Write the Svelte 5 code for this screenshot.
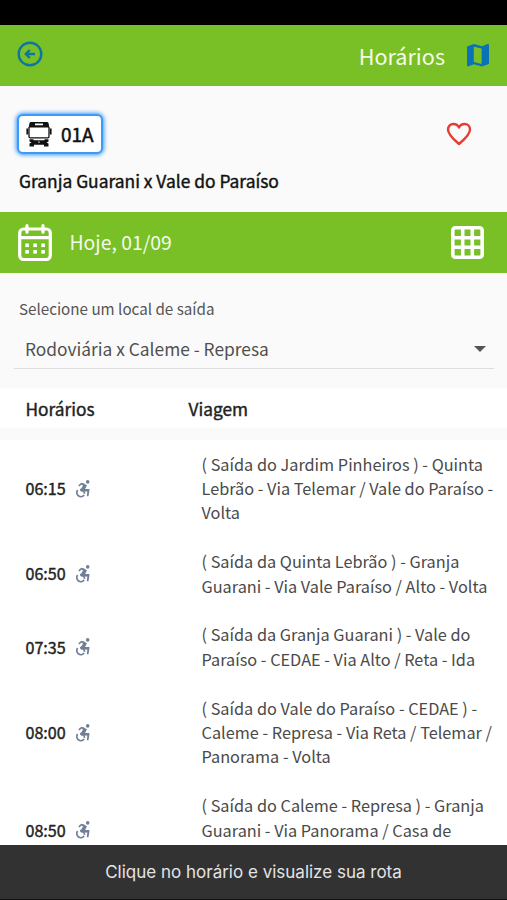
<script lang="ts">
  interface Trip {
    time: string;
    lines: string[];
  }

  const trips: Trip[] = [
    {
      time: "06:15",
      lines: [
        "( Saída do Jardim Pinheiros ) - Quinta",
        "Lebrão - Via Telemar / Vale do Paraíso -",
        "Volta",
      ],
    },
    {
      time: "06:50",
      lines: [
        "( Saída da Quinta Lebrão ) - Granja",
        "Guarani - Via Vale Paraíso / Alto - Volta",
      ],
    },
    {
      time: "07:35",
      lines: [
        "( Saída da Granja Guarani ) - Vale do",
        "Paraíso - CEDAE - Via Alto / Reta - Ida",
      ],
    },
    {
      time: "08:00",
      lines: [
        "( Saída do Vale do Paraíso - CEDAE ) -",
        "Caleme - Represa - Via Reta / Telemar /",
        "Panorama - Volta",
      ],
    },
    {
      time: "08:50",
      lines: [
        "( Saída do Caleme - Represa ) - Granja",
        "Guarani - Via Panorama / Casa de",
        "",
      ],
    },
  ];

  const dots = [0, 1, 2];

  let favorite = $state(false);
</script>

<div class="screen">
  <div class="status-bar"></div>

  <header class="toolbar">
    <button type="button" class="icon-button" aria-label="Voltar">
      <svg class="back" viewBox="0 0 26 26">
        <circle cx="13" cy="13" r="11.3" />
        <path d="M18 13H9.500M12.800 9L8.800 13l4 4" />
      </svg>
    </button>
    <h1>Horários</h1>
    <button type="button" class="icon-button" aria-label="Mapa">
      <svg class="map" viewBox="0 0 24 24">
        <path
          fill-rule="evenodd"
          d="M1.5 3.2L8 1l8 2.2L21.5 1q1.5-.4 1.5 1v18.3q0 .7-.8 1L16 23.4l-8-2.2-5.500 2.100Q1 23.700 1 22.300V4q0-.6.5-.8zM7.800 3.700v15.400l7.800 1.800V5.500z"
        />
      </svg>
    </button>
  </header>

  <section class="line">
    <div class="line-top">
      <div class="badge">
        <svg class="bus" viewBox="0 0 26 26">
          <path
            fill-rule="evenodd"
            d="M3.500 2Q3.700 1 5 1h16q1.300 0 1.500 1l.8 4.500H2.700zM9 2.500v1.800h8V2.500z"
          />
          <path class="frame" d="M3 6v9.500q0 1.300 1.300 1.300h17.400q1.300 0 1.300-1.300V6" />
          <path class="mirror" d="M1.300 7.500v6M24.700 7.500v6" />
          <path
            fill-rule="evenodd"
            d="M3.500 18.300h3.500l1 1h10l1-1h3.500v2.200l-2 1 2 1v3h-4.500v-1.700H8v1.700H3.500v-3l2-1-2-1zM12.400 20.500v1.200h1.200v-1.200z"
          />
        </svg>
        <span>01A</span>
      </div>
      <button
        type="button"
        class="icon-button"
        aria-label="Favorito"
        aria-pressed={favorite}
        onclick={() => (favorite = !favorite)}
      >
        <svg class="heart" class:filled={favorite} viewBox="0 0 26 24">
          <path
            d="M13 22C9 18.500 2 13 2 7.500 2 4.300 4.300 2 7.300 2 9.800 2 12 3.300 13 5.600 14 3.300 16.200 2 18.700 2 21.700 2 24 4.300 24 7.500 24 13 17 18.500 13 22z"
          />
        </svg>
      </button>
    </div>
    <h2>Granja Guarani x Vale do Paraíso</h2>
  </section>

  <div class="date-bar">
    <svg class="calendar" viewBox="0 0 34 38">
      <rect x="1.700" y="5" width="30.600" height="30.500" rx="4" />
      <path d="M2 13.700h30M9 1.700v6.500M25 1.700v6.500" />
      {#each dots as col}
        <rect class="dot" x={7.3 + col * 8} y="19.500" width="3.600" height="3.600" />
        <rect class="dot" x={7.3 + col * 8} y="26" width="3.600" height="3.600" />
      {/each}
    </svg>
    <span class="date">Hoje, 01/09</span>
    <svg class="grid" viewBox="0 0 33 33">
      <rect x="1.800" y="1.800" width="29.400" height="29.400" rx="2.500" />
      <path d="M11.700 2v29M21.300 2v29M2 11.700h29M2 21.300h29" />
    </svg>
  </div>

  <section class="departure">
    <div class="label">Selecione um local de saída</div>
    <div class="select">
      <span>Rodoviária x Caleme - Represa</span>
      <i class="caret"></i>
    </div>
  </section>

  <div class="table-head">
    <span>Horários</span>
    <span>Viagem</span>
  </div>

  <main class="trips">
    {#each trips as trip}
      <div class="trip">
        <div class="time">
          <span>{trip.time}</span>
          <svg class="wheelchair" viewBox="0 0 16 18">
            <circle class="solid" cx="12.700" cy="1.900" r="1.800" />
            <path d="M3.800 5.800L6.500 3.700l3.500 1" />
            <path class="solid" d="M7 3l5 2.300-1.900 3.700h4.300v1.800l-.9 5.500h-1.700l.5-4.800-5.800.2-1.500-1.500L7.800 6z" />
            <path class="wheel" d="M2.600 10a4 4 0 1 0 6.600 5" />
            <path class="wheel" d="M5 9.500q4.200.2 4.600 4.300" />
          </svg>
        </div>
        <div class="route">
          {#each trip.lines as line}
            <div>{line}</div>
          {/each}
        </div>
      </div>
    {/each}
  </main>

  <footer class="snackbar">Clique no horário e visualize sua rota</footer>
</div>

<style>
  :global(body) {
    margin: 0;
    background: #000;
  }

  .screen {
    display: flex;
    flex-direction: column;
    width: 507px;
    height: 900px;
    overflow: hidden;
    background: #fafafa;
    color: #4a4a4a;
    font-family: "Noto Sans CJK SC", "Noto Sans", sans-serif;
    font-size: 16.3px;
    line-height: 24.4px;
    white-space: nowrap;
  }

  .screen > * {
    flex-shrink: 0;
    box-sizing: border-box;
  }

  svg {
    display: block;
    flex-shrink: 0;
  }

  h1,
  h2 {
    margin: 0;
    font-weight: 400;
  }

  .icon-button {
    padding: 0;
    border: 0;
    background: none;
    cursor: pointer;
  }

  .status-bar {
    height: 25px;
    background: #000;
  }

  .toolbar {
    display: flex;
    align-items: center;
    height: 61px;
    padding: 0 17px;
    background: #79c026;
  }

  .toolbar h1 {
    margin: 0 21px 0 auto;
    padding-top: 2px;
    color: #f4faec;
    font-size: 21.6px;
  }

  .back {
    width: 26px;
    height: 26px;
    margin-bottom: 3px;
    fill: none;
    stroke: #0e74a0;
    stroke-width: 2.4;
  }

  .map {
    width: 24px;
    height: 24px;
    margin-bottom: 1px;
    fill: #0b72b5;
  }

  .line {
    height: 126px;
    padding: 28px 35px 0 17px;
  }

  .line-top {
    display: flex;
    align-items: center;
    justify-content: space-between;
    height: 40px;
  }

  .badge {
    display: flex;
    align-items: center;
    gap: 9px;
    box-sizing: border-box;
    width: 86px;
    height: 40px;
    padding-left: 7px;
    border: 2px solid #3b9bfa;
    border-radius: 6px;
    background: #fff;
    box-shadow: 0 0 4px 1px #3b9bfa;
    color: #111;
    font-size: 19px;
    -webkit-text-stroke: 0.5px;
  }

  .bus {
    width: 26px;
    height: 26px;
    fill: #111;
  }

  .bus .frame,
  .bus .mirror {
    fill: none;
    stroke: #111;
    stroke-width: 1.3;
  }

  .bus .mirror {
    stroke-width: 1.8;
  }

  .heart {
    width: 26px;
    height: 24px;
    fill: none;
    stroke: #e53d35;
    stroke-width: 2.4;
    stroke-linejoin: round;
  }

  .heart.filled {
    fill: #e53d35;
  }

  .line h2 {
    margin: 15px 0 0 2px;
    color: #111;
    font-size: 17.4px;
    -webkit-text-stroke: 0.4px;
  }

  .date-bar {
    display: flex;
    align-items: center;
    height: 61px;
    padding: 0 23px 0 18px;
    background: #79c026;
  }

  .date {
    margin: 0 auto 0 17.5px;
    color: #f4faec;
    font-size: 19.4px;
  }

  .calendar {
    width: 34px;
    height: 38px;
    fill: none;
    stroke: #fff;
    stroke-width: 3.2;
    stroke-linecap: round;
  }

  .dot {
    fill: #fff;
    stroke: none;
  }

  .grid {
    width: 33px;
    height: 33px;
    fill: none;
    stroke: #fff;
    stroke-width: 3.6;
  }

  .departure {
    height: 115px;
    padding: 23px 13px 0 14px;
  }

  .label {
    padding-left: 5px;
    color: #555;
    font-size: 15.2px;
  }

  .select {
    display: flex;
    align-items: center;
    justify-content: space-between;
    height: 39px;
    margin-top: 9px;
    padding: 0 8px 0 11px;
    border-bottom: 1px solid #dedede;
    color: #505050;
    font-size: 17.35px;
  }

  .caret {
    margin-top: 1px;
    border: 6px solid transparent;
    border-top-color: #555;
    border-bottom: 0;
  }

  .table-head {
    display: grid;
    grid-template-columns: 163px 1fr;
    align-items: center;
    height: 40px;
    margin-bottom: 12px;
    padding: 3px 0 0 25.5px;
    background: #fff;
    color: #222;
    font-size: 17.3px;
    -webkit-text-stroke: 0.4px;
  }

  .trips {
    height: 405px;
    overflow: hidden;
    background: #fff;
  }

  .trip {
    display: grid;
    grid-template-columns: 176px 1fr;
    align-items: center;
    padding: 11.6px 0 12.8px 25.5px;
  }

  .time {
    display: flex;
    align-items: center;
    gap: 9.5px;
    color: #222;
    font-size: 16.1px;
    -webkit-text-stroke: 0.4px;
  }

  .wheelchair {
    width: 16px;
    height: 18px;
    margin-top: 1px;
    fill: none;
    stroke: #718096;
    stroke-width: 1.7;
  }

  .wheelchair .solid {
    fill: #718096;
    stroke: none;
  }

  .route div {
    min-height: 24.4px;
  }

  .snackbar {
    height: 55px;
    border-bottom: 1px solid #111;
    background: #323232;
    color: #e4e4e4;
    font-family: Inter, sans-serif;
    font-size: 17px;
    line-height: 55px;
    text-align: center;
  }
</style>
